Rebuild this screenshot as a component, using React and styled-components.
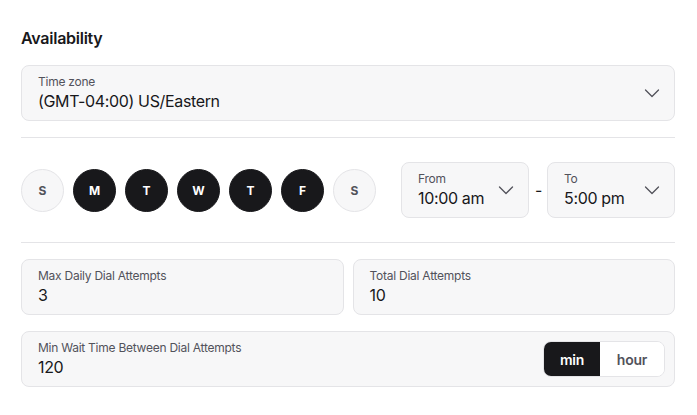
import React from "react";
import styled, { createGlobalStyle } from "styled-components";

const GlobalStyle = createGlobalStyle`
  body {
    margin: 0;
    background: #ffffff;
    font-family: Inter, "Noto Sans", sans-serif;
    color: #18181b;
  }
`;

const Page = styled.div`
  padding: 26px 22px 0 21px;
`;

const Title = styled.h2`
  margin: 0 0 15px;
  font-size: 16px;
  line-height: 24px;
  font-weight: 600;
  letter-spacing: -0.25px;
  color: #18181b;
`;

const Field = styled.div`
  box-sizing: border-box;
  height: 56px;
  width: ${(p) => p.width || "auto"};
  display: flex;
  align-items: center;
  justify-content: space-between;
  padding: 0 ${(p) => p.padRight || 14}px 0 16px;
  background: #f7f7f8;
  border: 1px solid #e4e4e7;
  border-radius: 8px;
`;

const FieldText = styled.div`
  display: flex;
  flex-direction: column;
`;

const Label = styled.span`
  font-size: 12px;
  line-height: 16px;
  letter-spacing: -0.25px;
  color: #52525b;
`;

const Value = styled.span`
  font-size: 16px;
  line-height: 22px;
  letter-spacing: -0.35px;
  color: #18181b;
`;

const Divider = styled.hr`
  margin: ${(p) => p.margin};
  height: 0;
  border: 0;
  border-top: 1px solid #e4e4e7;
`;

const ScheduleRow = styled.div`
  display: flex;
  align-items: center;
  justify-content: space-between;
`;

const Days = styled.div`
  display: flex;
  gap: 9px;
`;

const Day = styled.div`
  box-sizing: border-box;
  width: 43px;
  height: 43px;
  border-radius: 50%;
  display: flex;
  align-items: center;
  justify-content: center;
  font-size: 12px;
  font-weight: 700;
  background: ${(p) => (p.active ? "#18181b" : "#f7f7f8")};
  color: ${(p) => (p.active ? "#ffffff" : "#52525b")};
  border: 1px solid ${(p) => (p.active ? "#18181b" : "#e4e4e7")};
`;

const TimeRange = styled.div`
  display: flex;
  align-items: center;
  gap: 6px;
`;

const Dash = styled.span`
  font-size: 16px;
  color: #18181b;
  width: 6px;
  text-align: center;
`;

const Grid = styled.div`
  display: grid;
  grid-template-columns: 1fr 1fr;
  gap: 9px;
  margin-bottom: 16px;
`;

const Toggle = styled.div`
  display: flex;
  height: 36px;
  box-sizing: border-box;
  border: 1px solid #e4e4e7;
  border-radius: 8px;
  overflow: hidden;
  background: #ffffff;
`;

const ToggleOption = styled.div`
  width: ${(p) => p.width}px;
  display: flex;
  align-items: center;
  justify-content: center;
  font-size: 14px;
  font-weight: 600;
  letter-spacing: -0.2px;
  background: ${(p) => (p.active ? "#18181b" : "#ffffff")};
  color: ${(p) => (p.active ? "#ffffff" : "#52525b")};
`;

const Chevron = () => (
  <svg width="16" height="16" viewBox="0 0 16 16" fill="none" stroke="#52525b" strokeWidth="1.3" strokeLinecap="round" strokeLinejoin="round">
    <path d="M1.5 5L8 11.5L14.5 5" />
  </svg>
);

const days = [
  { d: "S", on: false },
  { d: "M", on: true },
  { d: "T", on: true },
  { d: "W", on: true },
  { d: "T", on: true },
  { d: "F", on: true },
  { d: "S", on: false },
];

export default function App() {
  return (
    <>
      <GlobalStyle />
      <Page>
        <Title>Availability</Title>
        <Field>
          <FieldText>
            <Label>Time zone</Label>
            <Value>(GMT-04:00) US/Eastern</Value>
          </FieldText>
          <Chevron />
        </Field>

        <Divider margin="16px 0 24px" />

        <ScheduleRow>
          <Days>
            {days.map((x, i) => (
              <Day key={i} active={x.on}>
                {x.d}
              </Day>
            ))}
          </Days>
          <TimeRange>
            <Field width="128px">
              <FieldText>
                <Label>From</Label>
                <Value>10:00 am</Value>
              </FieldText>
              <Chevron />
            </Field>
            <Dash>-</Dash>
            <Field width="128px">
              <FieldText>
                <Label>To</Label>
                <Value>5:00 pm</Value>
              </FieldText>
              <Chevron />
            </Field>
          </TimeRange>
        </ScheduleRow>

        <Divider margin="24px 0 16px" />

        <Grid>
          <Field>
            <FieldText>
              <Label>Max Daily Dial Attempts</Label>
              <Value>3</Value>
            </FieldText>
          </Field>
          <Field>
            <FieldText>
              <Label>Total Dial Attempts</Label>
              <Value>10</Value>
            </FieldText>
          </Field>
        </Grid>

        <Field padRight={9}>
          <FieldText>
            <Label>Min Wait Time Between Dial Attempts</Label>
            <Value>120</Value>
          </FieldText>
          <Toggle>
            <ToggleOption active width={56}>min</ToggleOption>
            <ToggleOption width={64}>hour</ToggleOption>
          </Toggle>
        </Field>
      </Page>
    </>
  );
}
